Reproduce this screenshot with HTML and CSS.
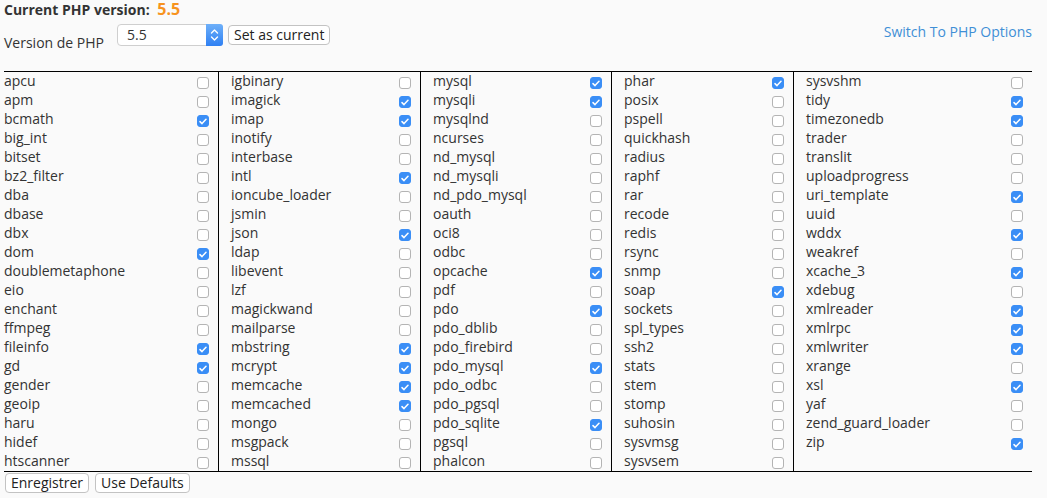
FILE: index.html
```html
<!DOCTYPE html>
<html>
<head>
  <meta charset="UTF-8">
  <title>PHP Selector - Extensions</title>
  <link rel="stylesheet" href="styles.css">
</head>
<body>
  <div class="page">
    <div class="current">Current PHP version: <span class="current-ver">5.5</span></div>
    <div class="toolbar">
      <span class="label">Version de PHP</span>
      <span class="select">
        <span class="select-value">5.5</span>
        <span class="select-arrow">
          <svg width="9" height="14" viewBox="0 0 9 14"><path d="M1.5 5 L4.5 2 L7.5 5 M1.5 9 L4.5 12 L7.5 9" fill="none" stroke="#fff" stroke-width="1.4" stroke-linecap="round" stroke-linejoin="round"/></svg>
        </span>
      </span>
      <button class="btn btn-set">Set as current</button>
      <a class="switch-link" href="#">Switch To PHP Options</a>
    </div>

    <div class="ext-grid" id="extGrid"></div>

    <div class="actions">
      <button class="btn">Enregistrer</button>
      <button class="btn">Use Defaults</button>
    </div>
  </div>

  <script>
    // name:1 = enabled
    var columns = [
      ['apcu','apm','bcmath:1','big_int','bitset','bz2_filter','dba','dbase','dbx','dom:1','doublemetaphone','eio','enchant','ffmpeg','fileinfo:1','gd:1','gender','geoip','haru','hidef','htscanner'],
      ['igbinary','imagick:1','imap:1','inotify','interbase','intl:1','ioncube_loader','jsmin','json:1','ldap','libevent','lzf','magickwand','mailparse','mbstring:1','mcrypt:1','memcache:1','memcached:1','mongo','msgpack','mssql'],
      ['mysql:1','mysqli:1','mysqlnd','ncurses','nd_mysql','nd_mysqli','nd_pdo_mysql','oauth','oci8','odbc','opcache:1','pdf','pdo:1','pdo_dblib','pdo_firebird','pdo_mysql:1','pdo_odbc','pdo_pgsql','pdo_sqlite:1','pgsql','phalcon'],
      ['phar:1','posix','pspell','quickhash','radius','raphf','rar','recode','redis','rsync','snmp','soap:1','sockets','spl_types','ssh2','stats','stem','stomp','suhosin','sysvmsg','sysvsem'],
      ['sysvshm','tidy:1','timezonedb:1','trader','translit','uploadprogress','uri_template:1','uuid','wddx:1','weakref','xcache_3:1','xdebug','xmlreader:1','xmlrpc:1','xmlwriter:1','xrange','xsl:1','yaf','zend_guard_loader','zip:1']
    ];
    var tick = '<svg width="8" height="7" viewBox="0 0 8 7"><path d="M1 3.6 L3 5.6 L7 1.2" fill="none" stroke="#fff" stroke-width="1.5" stroke-linecap="round" stroke-linejoin="round"/></svg>';
    var grid = document.getElementById('extGrid');
    columns.forEach(function(col) {
      var colDiv = document.createElement('div');
      colDiv.className = 'ext-col';
      col.forEach(function(item) {
        var parts = item.split(':');
        var row = document.createElement('div');
        row.className = 'ext-row';
        var name = document.createElement('span');
        name.className = 'ext-name';
        name.innerText = parts[0];
        var box = document.createElement('span');
        box.className = parts[1] ? 'chk chk-on' : 'chk';
        if (parts[1]) box.innerHTML = tick;
        row.appendChild(name);
        row.appendChild(box);
        colDiv.appendChild(row);
      });
      grid.appendChild(colDiv);
    });
  </script>
</body>
</html>
```

FILE: styles.css
```css
body { margin: 0; padding: 0; background-color: #fafafa; color: #333; font-family: "Open Sans", Arial, sans-serif; font-size: 14px; }
.page { width: 1028px; margin-left: 4px; }

.current { font-weight: bold; line-height: 16px; height: 16px; padding-top: 1px; }
.current-ver { color: #f7931e; font-size: 16px; line-height: 16px; margin-left: 4px; }

.toolbar { display: flex; align-items: flex-start; margin-top: 7px; height: 22px; }
.label { width: 113px; line-height: 19px; margin-top: 9px; }
.select {
  display: flex;
  width: 106px;
  height: 22px;
  box-sizing: border-box;
  border: 1px solid #cfcfcf;
  border-radius: 4px;
  background: #fff;
}
.select-value { flex: 1; padding-left: 9px; line-height: 20px; }
.select-arrow {
  width: 17px;
  display: flex;
  align-items: center;
  justify-content: center;
  background: linear-gradient(#6eb0f9, #2f80f3);
  border-radius: 0 3px 3px 0;
  margin: -1px -1px -1px 0;
}
.btn {
  font-family: "Open Sans", Arial, sans-serif;
  font-size: 14px;
  color: #222;
  background: #fff;
  border: 1px solid #c3c3c3;
  border-radius: 4px;
  height: 20px;
  line-height: 18px;
  padding: 0 5px;
  margin: 0;
}
.btn-set { margin-left: 5px; margin-top: 1px; }
.switch-link { margin-left: auto; margin-top: -2px; line-height: 19px; color: #3f8fd6; text-decoration: none; }

.ext-grid {
  display: grid;
  grid-template-columns: 214px 202px 191px 182px 239px;
  border-top: 1px solid #000;
  border-bottom: 1px solid #000;
  margin-top: 25px;
}
.ext-col { padding: 0 9px 0 12px; border-left: 1px solid #000; }
.ext-col:first-child { padding-left: 0; border-left: none; }
.ext-row { display: flex; justify-content: space-between; align-items: flex-start; height: 19px; }
.ext-name { line-height: 17px; }
.chk {
  width: 12px;
  height: 12px;
  box-sizing: border-box;
  margin-top: 5px;
  border: 1px solid #b4b4b4;
  border-radius: 3px;
  background: #fff;
  display: flex;
  align-items: center;
  justify-content: center;
}
.chk-on { background: #3a8ef6; border-color: #3a8ef6; }

.actions { display: flex; gap: 6px; margin-top: 1px; margin-left: 1px; }
```
